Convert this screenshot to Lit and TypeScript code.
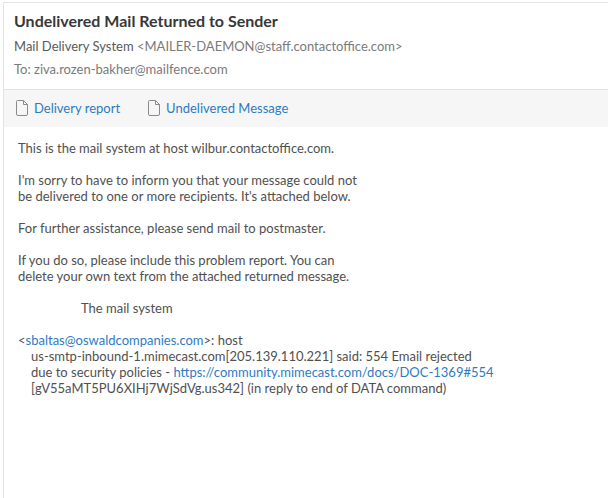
import { LitElement, html, css } from 'lit';
import { customElement } from 'lit/decorators.js';

const fileIcon = html`
  <svg class="file" width="12" height="16" viewBox="0 0 12 16" fill="none">
    <path d="M1.5 .5H7.5L11.5 4.5V14A1.5 1.5 0 0 1 10 15.5H2A1.5 1.5 0 0 1 .5 14V1.5A1 1 0 0 1 1.5 .5Z" stroke="#8a8a8a"/>
    <path d="M7.5 .5V4.5H11.5" stroke="#8a8a8a"/>
  </svg>
`;

@customElement('app-root')
export class AppRoot extends LitElement {
  static styles = css`
    :host {
      display: block;
      height: 498px;
      overflow: hidden;
      background: #fff;
      font-family: Lato, sans-serif;
      color: #444;
    }

    .mail {
      height: 100%;
      margin-left: 3px;
      border-left: 1px solid #e3e3e3;
      border-top: 1px solid #e3e3e3;
      margin-top: 2px;
      box-sizing: border-box;
    }

    .head {
      height: 87px;
      box-sizing: border-box;
      padding: 8px 10px 0;
      border-bottom: 1px solid #e3e3e3;
    }

    h1 {
      margin: 0;
      font-size: 16px;
      line-height: 20px;
      font-weight: 700;
      color: #383838;
    }

    .from {
      margin-top: 6px;
      font-size: 13px;
      line-height: 18px;
      color: #5a5a5a;
    }

    .from span {
      color: #7a7a7a;
    }

    .to {
      margin-top: 5px;
      font-size: 13px;
      line-height: 18px;
      color: #7a7a7a;
    }

    .attachments {
      display: flex;
      gap: 28px;
      height: 37px;
      box-sizing: border-box;
      padding: 0 11px 1px 12px;
      align-items: center;
      background: #f6f6f6;
    }

    .attachment {
      display: flex;
      align-items: center;
      gap: 6px;
      font-size: 13px;
      color: #2f7bc0;
    }

    .body {
      padding: 13px 14px;
      font-size: 13px;
      line-height: 16px;
      color: #505050;
    }

    .body p {
      margin: 0 0 16px;
    }

    .line {
      display: block;
      white-space: nowrap;
    }

    .indent {
      padding-left: 13px;
    }

    .signature {
      padding-left: 63px;
    }

    a {
      color: #2f7bc0;
      text-decoration: none;
    }
  `;

  render () {
    return html`
      <div class="mail">
        <div class="head">
          <h1>Undelivered Mail Returned to Sender</h1>
          <div class="from">Mail Delivery System <span>&lt;MAILER-DAEMON@staff.contactoffice.com&gt;</span></div>
          <div class="to">To: ziva.rozen-bakher@mailfence.com</div>
        </div>
        <div class="attachments">
          <div class="attachment">${fileIcon}Delivery report</div>
          <div class="attachment">${fileIcon}Undelivered Message</div>
        </div>
        <div class="body">
          <p>This is the mail system at host wilbur.contactoffice.com.</p>
          <p>
            <span class="line">I'm sorry to have to inform you that your message could not</span>
            <span class="line">be delivered to one or more recipients. It's attached below.</span>
          </p>
          <p>For further assistance, please send mail to postmaster.</p>
          <p>
            <span class="line">If you do so, please include this problem report. You can</span>
            <span class="line">delete your own text from the attached returned message.</span>
          </p>
          <p class="signature">The mail system</p>
          <p>
            <span class="line">&lt;<a>sbaltas@oswaldcompanies.com</a>&gt;: host</span>
            <span class="line indent">us-smtp-inbound-1.mimecast.com[205.139.110.221] said: 554 Email rejected</span>
            <span class="line indent">due to security policies - <a>https://community.mimecast.com/docs/DOC-1369#554</a></span>
            <span class="line indent">[gV55aMT5PU6XIHj7WjSdVg.us342] (in reply to end of DATA command)</span>
          </p>
        </div>
      </div>
    `;
  }
}
